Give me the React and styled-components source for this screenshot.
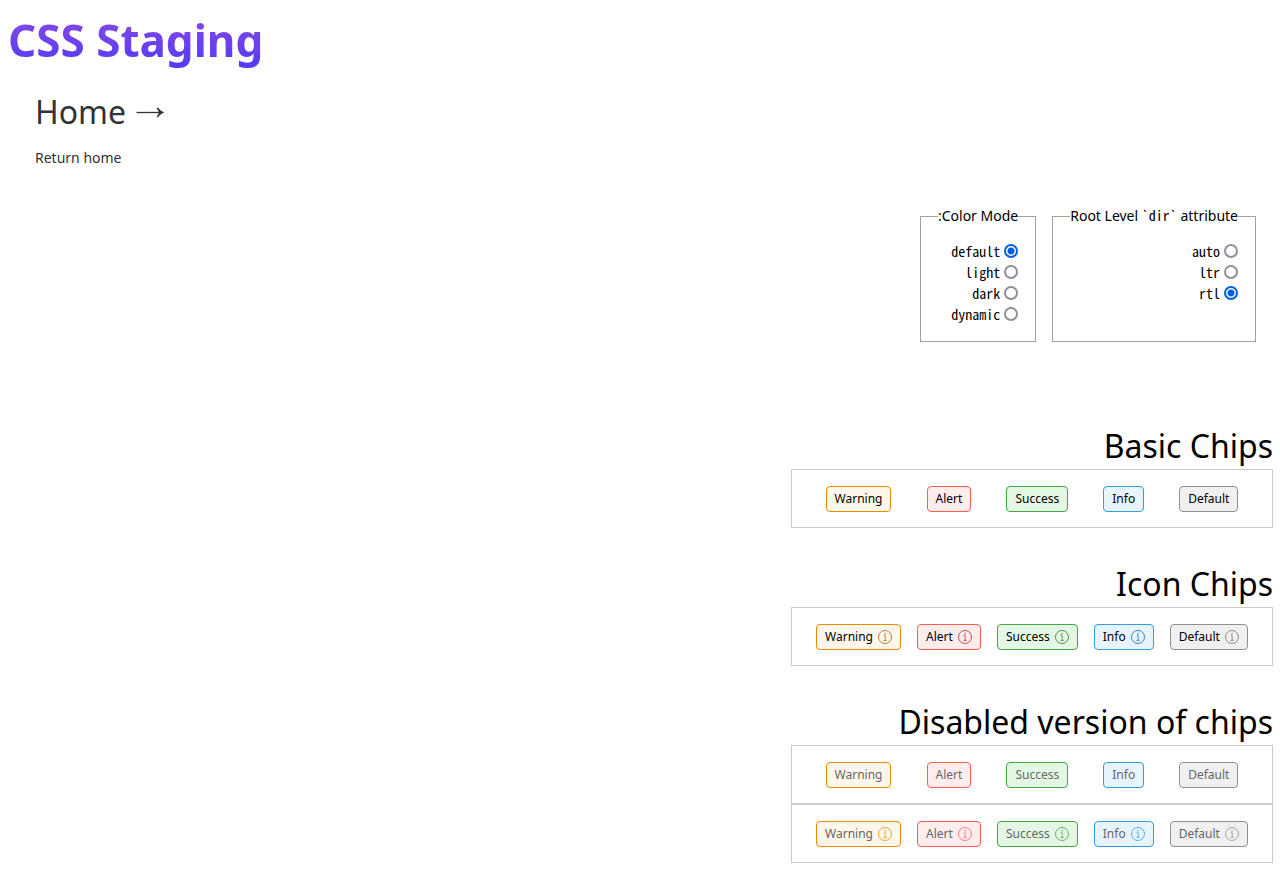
import React from "react";
import styled, { createGlobalStyle } from "styled-components";

const GlobalStyle = createGlobalStyle`
  *, *::before, *::after { box-sizing: border-box; }
  body {
    margin: 0;
    background: #fff;
    color: #000;
    font-family: "Noto Sans", sans-serif;
    font-size: 14px;
  }
`;

const Page = styled.main`
  display: flex;
  flex-direction: column;
  align-items: flex-end;
  padding: 8px 7px 7px 8px;
`;

const Title = styled.h1`
  align-self: flex-start;
  margin: 0;
  font-size: 44px;
  line-height: 64px;
  font-weight: 700;
  color: transparent;
  background: linear-gradient(#8f4be0, #4f39fa);
  background-clip: text;
  -webkit-background-clip: text;
`;

const HomeCard = styled.a`
  align-self: flex-start;
  padding: 16px 27px;
  color: #333;
  text-decoration: none;
`;

const HomeTitle = styled.h2`
  display: flex;
  align-items: center;
  gap: 10px;
  margin: 0 0 12px;
  font-size: 32px;
  line-height: 48px;
  font-weight: 400;
`;

const HomeText = styled.p`
  margin: 0;
  line-height: 20px;
`;

const Controls = styled.form`
  display: flex;
  gap: 16px;
  margin: 22px 17px 48px 0;
`;

const Group = styled.fieldset`
  display: flex;
  flex-direction: column;
  align-items: flex-end;
  margin: 0;
  padding: 14px 17px 17px;
  border: 1px solid #a0a0a0;
`;

const Legend = styled.legend`
  padding: 0;
  line-height: 20px;
`;

const Code = styled.code`
  font-family: "Noto Sans Mono CJK JP", "Noto Sans Mono CJK SC", "Liberation Mono", monospace;
  font-size: 14px;
  line-height: 1;
`;

const Option = styled.label`
  display: flex;
  align-items: center;
  gap: 4px;
  height: 21px;
`;

const Radio = styled.input`
  appearance: none;
  width: 14px;
  height: 14px;
  margin: 0;
  border: 2px solid #8f8f9d;
  border-radius: 50%;
  background: #fff;

  &:checked {
    border-color: #0060df;
    background: radial-gradient(circle, #0060df 3px, #fff 4px);
  }
`;

const Section = styled.section`
  display: flex;
  flex-direction: column;
  width: 100%;
  max-width: 482px;
  margin-top: 32px;
`;

const Heading = styled.h2`
  margin: 0;
  font-size: 32px;
  line-height: 47px;
  font-weight: 400;
  text-align: right;
`;

const ChipRow = styled.div`
  display: flex;
  justify-content: space-around;
  padding: 16px 16px 15px;
  border: 1px solid #ccc;
`;

const tones = {
  warning: { border: "#ed8b00", fill: "#fff7eb", icon: "#a75d08" },
  alert: { border: "#fa5f57", fill: "#ffecec", icon: "#b8232c" },
  success: { border: "#46a546", fill: "#e4f7e4", icon: "#2b7a2b" },
  info: { border: "#2f9edb", fill: "#e7f4fd", icon: "#1b6a9c" },
  default: { border: "#8f8f8f", fill: "#f0f0f0", icon: "#707070" },
};

const Chip = styled.button`
  display: inline-flex;
  align-items: center;
  gap: 5px;
  height: 26px;
  padding: 0 8px;
  border: 1px solid ${(p) => tones[p.$tone].border};
  border-radius: 4px;
  background: ${(p) => tones[p.$tone].fill};
  color: #000;
  font: 12px/18px "Noto Sans", sans-serif;

  svg { color: ${(p) => tones[p.$tone].icon}; }

  &:disabled { color: #666; }
  &:disabled svg { color: ${(p) => tones[p.$tone].border}; }
`;

function InfoIcon() {
  return (
    <svg width="14" height="14" viewBox="0 0 14 14" fill="none" stroke="currentColor" aria-hidden="true">
      <circle cx="7" cy="7" r="6.5" strokeWidth="0.8" />
      <path d="M5.6 5.7H7.2V10.4M5.4 10.4H8.8" strokeWidth="0.7" />
      <circle cx="7" cy="3.7" r="0.7" fill="currentColor" stroke="none" />
    </svg>
  );
}

function Arrow() {
  return (
    <svg width="29" height="12" viewBox="0 0 29 12" aria-hidden="true">
      <path d="M0.5 6.5H26" stroke="#333" strokeWidth="1.3" />
      <path d="M22 1.6C23.6 3.9 25.6 5.5 28.4 6.5C25.6 7.5 23.6 9.1 22 11.4L20.6 10.8C21.8 9.2 22.6 7.8 22.8 6.5C22.6 5.2 21.8 3.8 20.6 2.2Z" fill="#333" />
    </svg>
  );
}

const chips = [
  ["warning", "Warning"],
  ["alert", "Alert"],
  ["success", "Success"],
  ["info", "Info"],
  ["default", "Default"],
];

function Chips({ icon, disabled }) {
  return (
    <ChipRow>
      {chips.map(([tone, label]) => (
        <Chip key={tone} type="button" $tone={tone} disabled={disabled}>
          {label}
          {icon && <InfoIcon />}
        </Chip>
      ))}
    </ChipRow>
  );
}

function Options({ name, values, selected }) {
  return values.map((value) => (
    <Option key={value}>
      <Code>{value}</Code>
      <Radio type="radio" name={name} value={value} defaultChecked={value === selected} />
    </Option>
  ));
}

export default function App() {
  return (
    <>
      <GlobalStyle />
      <Page>
        <Title>CSS Staging</Title>
        <HomeCard href="/">
          <HomeTitle>Home <Arrow /></HomeTitle>
          <HomeText>Return home</HomeText>
        </HomeCard>
        <Controls>
          <Group>
            <Legend>:Color Mode</Legend>
            <Options name="mode" values={["default", "light", "dark", "dynamic"]} selected="default" />
          </Group>
          <Group>
            <Legend>Root Level <Code>`dir`</Code> attribute</Legend>
            <Options name="dir" values={["auto", "ltr", "rtl"]} selected="rtl" />
          </Group>
        </Controls>
        <Section>
          <Heading>Basic Chips</Heading>
          <Chips />
        </Section>
        <Section>
          <Heading>Icon Chips</Heading>
          <Chips icon />
        </Section>
        <Section>
          <Heading>Disabled version of chips</Heading>
          <Chips disabled />
          <Chips icon disabled />
        </Section>
      </Page>
    </>
  );
}
